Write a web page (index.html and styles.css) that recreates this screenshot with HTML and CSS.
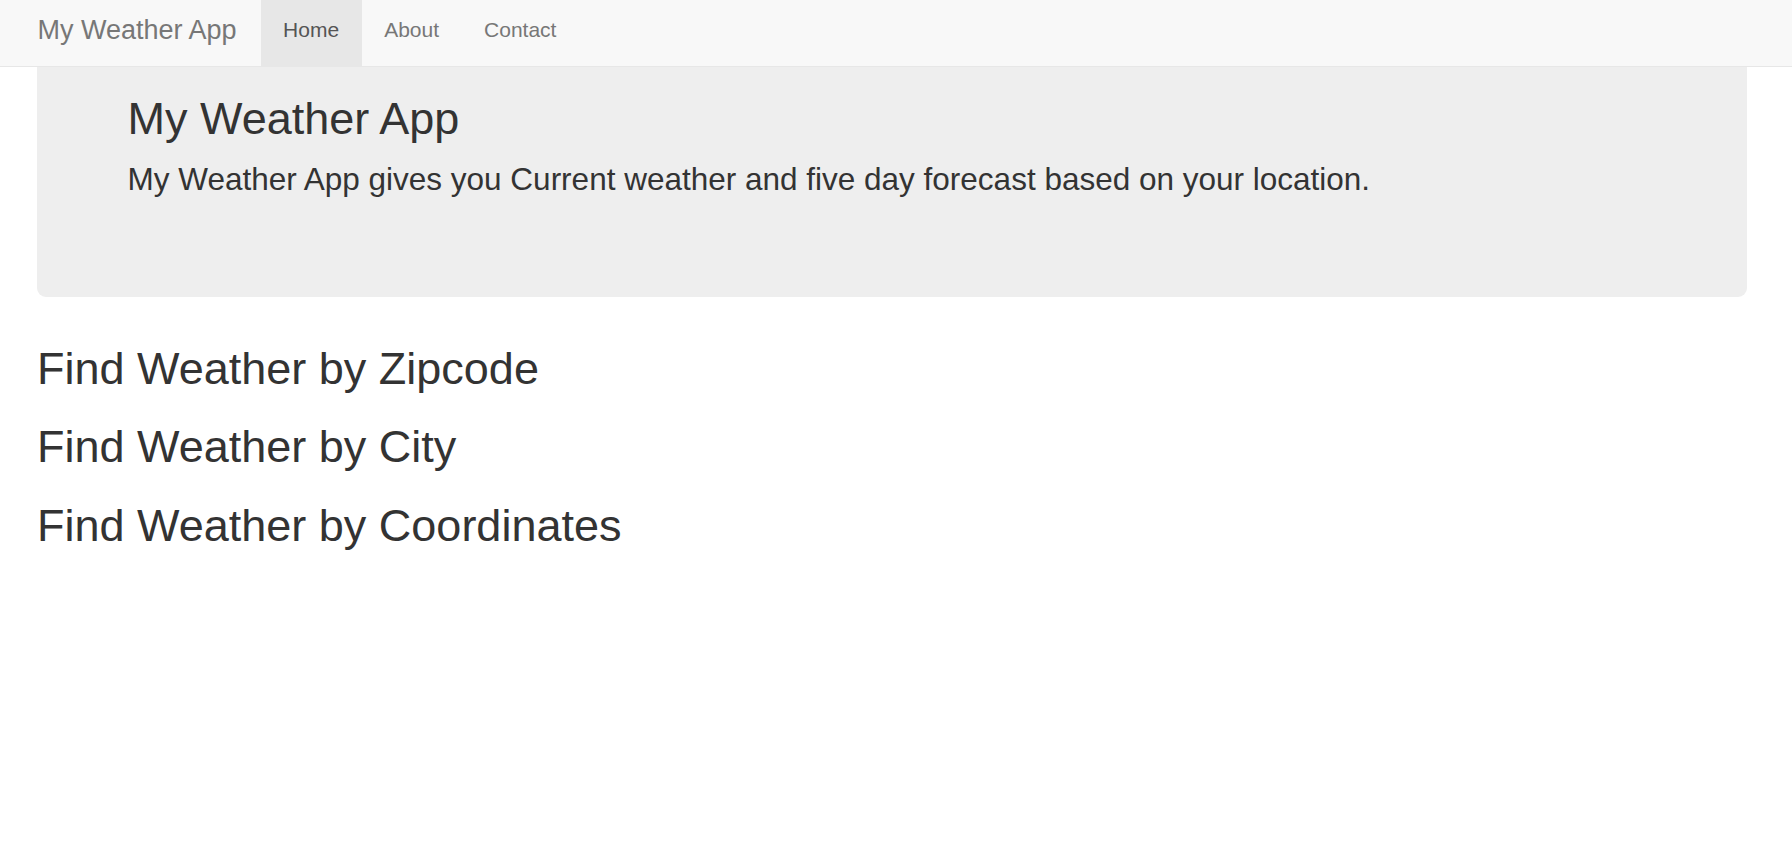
FILE: index.html
```html
<!DOCTYPE html>
<html lang="en">
<head>
<meta charset="utf-8">
<title>My Weather App</title>
<link rel="stylesheet" href="styles.css">
</head>
<body>
<nav class="navbar">
  <a class="brand" href="#">My Weather App</a>
  <ul class="nav">
    <li><a class="nav-link active" href="#">Home</a></li>
    <li><a class="nav-link" href="#">About</a></li>
    <li><a class="nav-link" href="#">Contact</a></li>
  </ul>
</nav>
<div class="jumbotron">
  <h1 class="jumbo-title">My Weather App</h1>
  <p class="jumbo-lead">My Weather App gives you Current weather and five day forecast based on your location.</p>
</div>
<div class="finders">
  <h2 class="finder">Find Weather by Zipcode</h2>
  <h2 class="finder">Find Weather by City</h2>
  <h2 class="finder">Find Weather by Coordinates</h2>
</div>
</body>
</html>
```

FILE: styles.css
```css
html, body {
  margin: 0;
  padding: 0;
  background: #fff;
  font-family: "Liberation Sans", Arial, sans-serif;
  color: #333;
}

.navbar {
  display: flex;
  align-items: stretch;
  height: 66px;
  padding-left: 14.5px;
  background: #f8f8f8;
  border-bottom: 1px solid #e7e7e7;
}

.brand {
  display: block;
  padding: 0 24px 6px 23px;
  font-size: 27px;
  line-height: 60px;
  color: #777;
  text-decoration: none;
}

.nav {
  display: flex;
  list-style: none;
  margin: 0;
  padding: 0;
}

.nav-link {
  display: block;
  height: 60px;
  padding: 0 22.5px 6px 22.5px;
  font-size: 21px;
  line-height: 60px;
  color: #777;
  text-decoration: none;
}

.nav-link.active {
  color: #555;
  background: #e7e7e7;
}

.jumbotron {
  margin: 0 45px 0 37px;
  padding: 28px 90px 72px 90.5px;
  background: #eee;
  border-radius: 0 0 9px 9px;
}

.jumbo-title {
  margin: 0 0 14.5px 0;
  font-size: 45px;
  font-weight: 400;
  line-height: 47.5px;
  color: #333;
}

.jumbo-lead {
  margin: 0 0 22.5px 0;
  font-size: 31.5px;
  line-height: 45px;
  color: #333;
}

.finders {
  padding: 48px 0 0 37px;
}

.finder {
  margin: 0 0 31.2px 0;
  font-size: 45px;
  font-weight: 400;
  line-height: 47.5px;
  color: #333;
}
```
